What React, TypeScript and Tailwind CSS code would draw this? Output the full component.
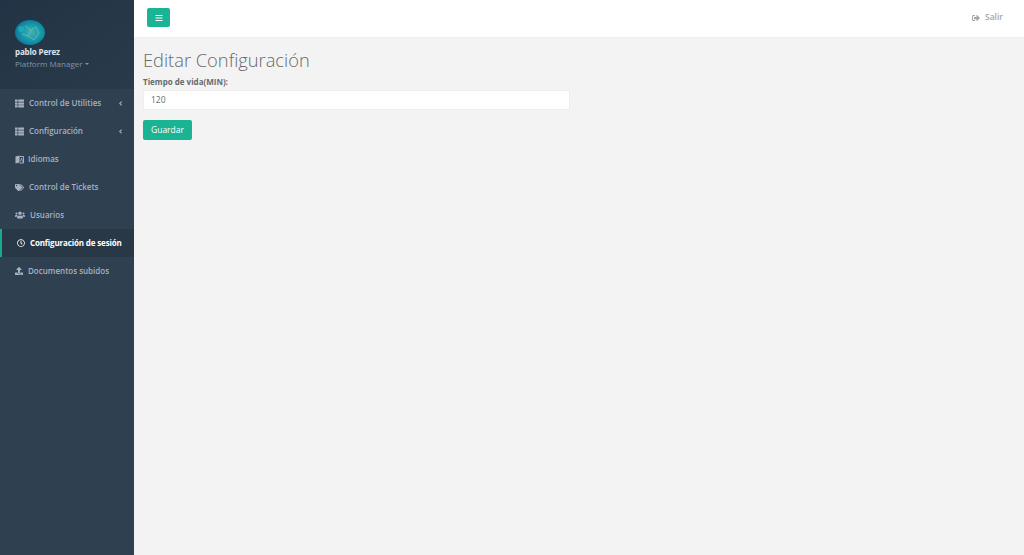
import React from 'react';
import { FaThList, FaTags, FaUsers, FaRegClock, FaUpload, FaAngleLeft, FaBars, FaSignOutAlt } from 'react-icons/fa';

const IdiomasIcon: React.FC<{ size?: number; className?: string }> = ({ className }) => (
  <svg width="9" height="9" viewBox="0 0 9 9" className={className}>
    <path d="M0.5 1.5L4.5 0.5V7.5L0.5 8.5Z" fill="currentColor" />
    <path d="M4.5 1.5H8.5V8H4.5" fill="none" stroke="currentColor" strokeWidth="1" />
    <path d="M5.5 6.5L6.5 3L7.5 6.5" fill="none" stroke="currentColor" strokeWidth="0.8" />
  </svg>
);

const menu = [
  { label: 'Control de Utilities', icon: FaThList, size: 9, gap: 'gap-[5px]', arrow: true },
  { label: 'Configuración', icon: FaThList, size: 9, gap: 'gap-[5px]', arrow: true },
  { label: 'Idiomas', icon: IdiomasIcon, size: 9, gap: 'gap-[4px]' },
  { label: 'Control de Tickets', icon: FaTags, size: 9, gap: 'gap-[5px]' },
  { label: 'Usuarios', icon: FaUsers, size: 10, gap: 'gap-[5px]' },
  { label: 'Configuración de sesión', icon: FaRegClock, size: 8, gap: 'gap-[5px]', active: true },
  { label: 'Documentos subidos', icon: FaUpload, size: 8, gap: 'gap-[5px]' },
];

const Avatar = () => (
  <svg width="30" height="25" viewBox="0 0 30 25" className="block">
    <defs>
      <radialGradient id="globe" cx="55%" cy="50%" r="58%">
        <stop offset="0%" stopColor="#45aeb0" />
        <stop offset="55%" stopColor="#169aa8" />
        <stop offset="100%" stopColor="#0f6f9e" />
      </radialGradient>
    </defs>
    <ellipse cx="15" cy="12.5" rx="15" ry="12.5" fill="url(#globe)" />
    <path d="M10 6l6 4 5-3M16 10l-3 6 6 4M13 16l-6-2M21 7l3 6-5 7" stroke="#7fd0c8" strokeWidth="1" fill="none" opacity="0.55" />
    <circle cx="6" cy="9" r="3" fill="#21b9c4" opacity="0.6" />
  </svg>
);

const App: React.FC = () => {
  return (
    <div className="flex h-[555px] w-[1024px] overflow-hidden bg-[#f3f3f4] font-['Open_Sans',sans-serif] text-[#676a6c]">
      <aside className="flex w-[134px] shrink-0 flex-col bg-[#2f4050]">
        <div className="h-[89px] bg-gradient-to-br from-[#223345] via-[#263748] to-[#293a4b] pl-[15px] pt-[20px]">
          <Avatar />
          <p className="mt-[1px] text-[8px] font-bold leading-[12px] tracking-[-0.15px] text-[#dfe4ed]">pablo Perez</p>
          <p className="flex items-center gap-[3px] text-[8px] leading-[11px] text-[#8095a8]">
            Platform Manager
            <span className="mt-[1px] border-x-[2px] border-t-[2px] border-x-transparent border-t-[#8095a8]" />
          </p>
        </div>
        <nav>
          {menu.map((m) => {
            const Icon = m.icon;
            return (
              <div
                key={m.label}
                className={
                  m.active
                    ? `flex h-[28px] items-center ${m.gap} border-l-[2px] border-[#19aa8d] bg-[#293846] pl-[15px] text-[8px] font-bold tracking-[-0.15px] text-white`
                    : `flex h-[28px] items-center ${m.gap} pl-[15px] text-[8px] font-semibold text-[#a7b1c2]`
                }
              >
                <Icon size={m.size} className="shrink-0" />
                <span className="whitespace-nowrap">{m.label}</span>
                {m.arrow && <FaAngleLeft size={7} className="ml-auto mr-[10px]" />}
              </div>
            );
          })}
        </nav>
      </aside>
      <main className="min-w-0 flex-1">
        <header className="flex h-[38px] items-center justify-between border-b border-[#eeeff0] bg-white pb-[2px] pl-[13px] pr-[21px]">
          <button className="flex h-[19px] w-[23px] items-center justify-center rounded-[2px] bg-[#1ab394] text-white">
            <FaBars size={8} />
          </button>
          <span className="flex items-center gap-[5px] text-[8.5px] font-semibold text-[#a3a6a8]">
            <FaSignOutAlt size={8} />
            Salir
          </span>
        </header>
        <div className="pl-[9px] pt-[10px]">
          <h2 className="text-[18.3px] font-light leading-[24px] text-[#676a6c]">Editar Configuración</h2>
          <label className="mt-[4px] block text-[8px] font-bold leading-[11px]">Tiempo de vida(MIN):</label>
          <div className="mt-[3px] flex h-[20px] w-[427px] items-center rounded-[1px] border border-[#eeeeee] bg-white pl-[7px] text-[8.5px]">
            120
          </div>
          <button className="mt-[10px] h-[20px] w-[49px] rounded-[2px] bg-[#1ab394] text-[8.5px] text-white">Guardar</button>
        </div>
      </main>
    </div>
  );
};

export default App;
